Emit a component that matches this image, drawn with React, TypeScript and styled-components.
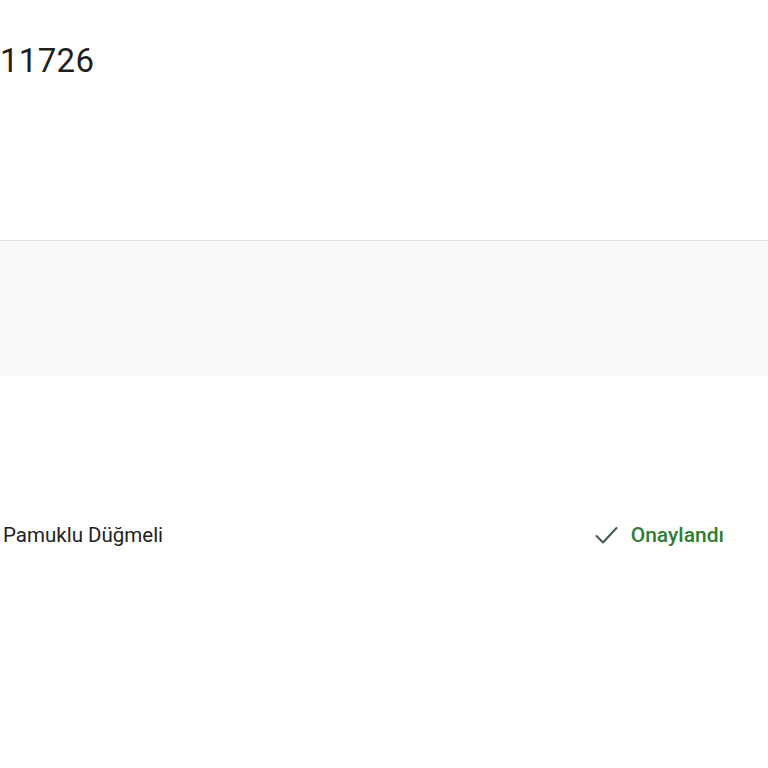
import styled, { createGlobalStyle } from "styled-components";

const GlobalStyle = createGlobalStyle`
  html, body {
    margin: 0;
    padding: 0;
    background: #ffffff;
    font-family: Roboto, "Liberation Sans", Arial, sans-serif;
  }
`;

const Page = styled.div`
  width: 768px;
  height: 768px;
  overflow: hidden;
  display: flex;
  flex-direction: column;
  background: #ffffff;
`;

const Header = styled.div`
  height: 241px;
  box-sizing: border-box;
  padding-top: 39px;
  border-bottom: 1px solid #e2e2e2;
`;

const OrderNumber = styled.h1`
  margin: 0;
  font-size: 33px;
  font-weight: 400;
  line-height: 44px;
  color: #1f1f1f;
  letter-spacing: 0.3px;
`;

const Band = styled.div`
  height: 135px;
  background: #f9f9f9;
`;

const ItemRow = styled.div`
  display: flex;
  align-items: center;
  justify-content: space-between;
  padding: 145px 44px 0 3px;
`;

const ItemName = styled.span`
  font-size: 20.5px;
  color: #222222;
  line-height: 28px;
`;

const Status = styled.div`
  display: flex;
  align-items: center;
  gap: 13px;
  color: #2e7d32;
  font-size: 21px;
  font-weight: 500;
  line-height: 28px;
`;

const CheckIcon = () => (
  <svg width="23" height="19" viewBox="0 0 23 19" fill="none">
    <path
      d="M1.5 10 L8 16.5 L21.5 2"
      stroke="#3f5a48"
      strokeWidth="2"
      strokeLinecap="round"
      strokeLinejoin="round"
    />
  </svg>
);

export default function App() {
  return (
    <Page>
      <GlobalStyle />
      <Header>
        <OrderNumber>11726</OrderNumber>
      </Header>
      <Band />
      <ItemRow>
        <ItemName>Pamuklu Düğmeli</ItemName>
        <Status>
          <CheckIcon />
          Onaylandı
        </Status>
      </ItemRow>
    </Page>
  );
}
